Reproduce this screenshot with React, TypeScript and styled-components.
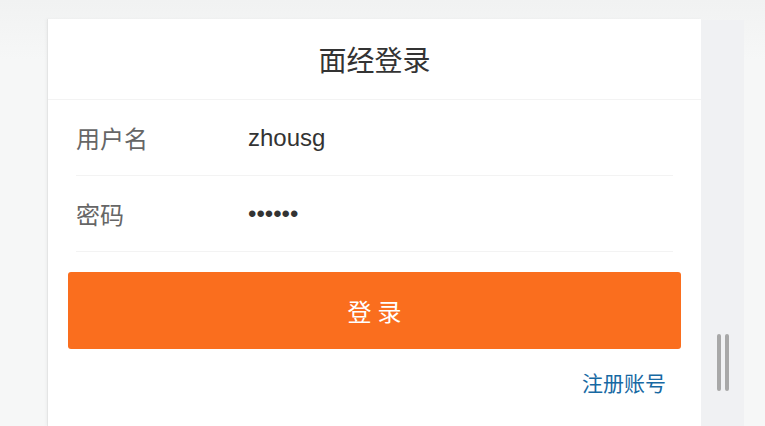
import styled, { createGlobalStyle } from 'styled-components'

const GlobalStyle = createGlobalStyle`
  html, body {
    margin: 0;
    padding: 0;
    background: #f6f7f7;
    font-family: "Liberation Sans", "Noto Sans CJK SC", sans-serif;
  }
`

const Page = styled.div`
  display: flex;
  align-items: stretch;
  height: 426px;
  padding: 19px 0 0 47px;
  box-sizing: border-box;
  overflow: hidden;
  background: linear-gradient(#f1f2f2, #f6f7f7 60px);
`
const Card = styled.div`
  width: 654px;
  background: #fff;
  border-left: 1px solid #e4e5e5;
  box-shadow: -1px 0 3px rgba(0, 0, 0, 0.04);
  box-sizing: border-box;
`
const Header = styled.div`
  height: 80px;
  display: flex;
  align-items: center;
  justify-content: center;
  border-bottom: 1px solid #f3f3f3;
`
const Title = styled.h1`
  margin: 0;
  font-size: 28px;
  font-weight: normal;
  color: #333;
`
const Form = styled.div`
  padding: 0 28px;
`
const Row = styled.div`
  display: flex;
  align-items: center;
  height: 75px;
  border-bottom: 1px solid #f3f3f3;
`
const Label = styled.label`
  width: 172px;
  font-size: 24px;
  color: #666;
`
const Input = styled.input`
  flex: 1;
  border: 0;
  outline: none;
  padding: 0;
  background: transparent;
  font-family: "Liberation Sans", "Noto Sans CJK SC", sans-serif;
  font-size: 24px;
  color: #333;
`
const SubmitButton = styled.button`
  display: block;
  width: 613px;
  height: 77px;
  margin: 20px 0 0 20px;
  border: 0;
  border-radius: 3px;
  background: #fa6e1e;
  color: #fff;
  font-family: "Liberation Sans", "Noto Sans CJK SC", sans-serif;
  font-size: 24px;
  letter-spacing: 6px;
  text-indent: 6px;
  cursor: pointer;
`
const Links = styled.div`
  display: flex;
  justify-content: flex-end;
  padding: 18px 35px 0 0;
`
const RegisterLink = styled.a`
  font-size: 21px;
  color: #1769a3;
  text-decoration: none;
`
const Side = styled.div`
  width: 43px;
  background: #f0f1f3;
  display: flex;
  justify-content: center;
  gap: 4px;
  padding-top: 314px;
  margin-top: 1px;
`
const Grip = styled.span`
  width: 4px;
  height: 57px;
  border-radius: 2px;
  background: #a8a8a8;
`

export default function App() {
  return (
    <>
      <GlobalStyle />
      <Page>
        <Card>
          <Header>
            <Title>面经登录</Title>
          </Header>
          <Form>
            <Row>
              <Label>用户名</Label>
              <Input type="text" defaultValue="zhousg" />
            </Row>
            <Row>
              <Label>密码</Label>
              <Input type="password" defaultValue="123456" />
            </Row>
          </Form>
          <SubmitButton>登录</SubmitButton>
          <Links>
            <RegisterLink href="#">注册账号</RegisterLink>
          </Links>
        </Card>
        <Side>
          <Grip />
          <Grip />
        </Side>
      </Page>
    </>
  )
}
